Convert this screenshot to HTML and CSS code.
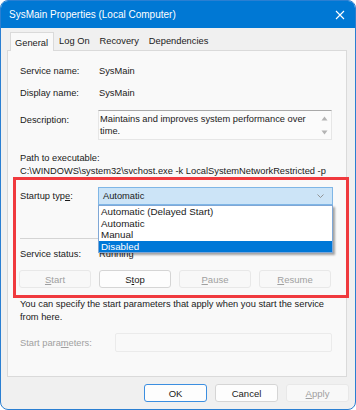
FILE: index.html
```html
<!DOCTYPE html>
<html>
<head>
    <title>SysMain Properties (Local Computer)</title>
    <link rel="stylesheet" href="styles.css">
</head>
<body>
    <div class="window">
        <div class="titlebar">
            <span class="title">SysMain Properties (Local Computer)</span>
            <svg class="close" width="10" height="10" viewBox="0 0 10 10">
                <path d="M1 1L9 9M9 1L1 9" stroke="#fff" stroke-width="1.1" fill="none"/>
            </svg>
        </div>

        <div class="tabs">
            <div class="tab active">General</div>
            <div class="tab">Log On</div>
            <div class="tab">Recovery</div>
            <div class="tab">Dependencies</div>
        </div>

        <div class="panel">
            <div class="row row-name">
                <span class="label">Service name:</span>
                <span class="value">SysMain</span>
            </div>
            <div class="row row-display">
                <span class="label">Display name:</span>
                <span class="value">SysMain</span>
            </div>
            <div class="row row-desc">
                <span class="label">Description:</span>
                <div class="textarea">
                    <div class="textarea-text">Maintains and improves system performance over time.</div>
                    <div class="scrollbar">
                        <svg width="7" height="5" viewBox="0 0 7 5"><path d="M3.5 0.5L6.5 4.5H0.5Z" fill="#b4b4b4"/></svg>
                        <svg width="7" height="5" viewBox="0 0 7 5"><path d="M3.5 4.5L6.5 0.5H0.5Z" fill="#b4b4b4"/></svg>
                    </div>
                </div>
            </div>

            <div class="path-label">Path to executable:</div>
            <div class="path">C:\WINDOWS\system32\svchost.exe -k LocalSystemNetworkRestricted -p</div>

            <div class="highlight">
                <div class="row row-startup">
                    <span class="label">Startup typ<u>e</u>:</span>
                    <div class="select">
                        <span>Automatic</span>
                        <svg class="chevron" width="7" height="4" viewBox="0 0 7 4">
                            <path d="M0.5 0.5L3.5 3.5L6.5 0.5" stroke="#8a8a8a" stroke-width="0.9" fill="none"/>
                        </svg>
                        <div class="dropdown">
                            <div class="option">Automatic (Delayed Start)</div>
                            <div class="option">Automatic</div>
                            <div class="option">Manual</div>
                            <div class="option selected">Disabled</div>
                        </div>
                    </div>
                </div>
                <div class="separator"></div>
                <div class="row row-status">
                    <span class="label">Service status:</span>
                    <span class="value">Running</span>
                </div>
                <div class="service-buttons">
                    <button class="btn" disabled><u>S</u>tart</button>
                    <button class="btn">S<u>t</u>op</button>
                    <button class="btn" disabled><u>P</u>ause</button>
                    <button class="btn" disabled><u>R</u>esume</button>
                </div>
                <div class="red-frame"></div>
            </div>

            <div class="info">You can specify the start parameters that apply when you start the service from here.</div>

            <div class="row row-params">
                <span class="label params-label">Start para<u>m</u>eters:</span>
                <div class="input"></div>
            </div>
        </div>

        <div class="footer">
            <button class="btn default">OK</button>
            <button class="btn">Cancel</button>
            <button class="btn" disabled><u>A</u>pply</button>
        </div>
    </div>
</body>
</html>
```

FILE: styles.css
```css
body {
    margin: 0;
    background: #ffffff;
    font-family: "Liberation Sans", Arial, sans-serif;
    font-size: 9.3px;
    color: #1a1a1a;
}
.window {
    width: 356px;
    height: 410px;
    box-sizing: border-box;
    border: 1px solid #2a7fd2;
    border-radius: 8px;
    background: #f0f0f0;
    overflow: hidden;
}
.titlebar {
    height: 27px;
    background: #0078d4;
    color: #ffffff;
    display: flex;
    align-items: center;
    justify-content: space-between;
    padding: 0 10px 0 8px;
}
.title {
    font-size: 10px;
}
.tabs {
    display: flex;
    margin: 4px 0 0 9px;
    height: 18px;
    position: relative;
    z-index: 1;
}
.tab {
    padding: 0 5px;
    line-height: 18px;
    font-size: 9.3px;
}
.tab.active {
    padding: 0 5px 0 4px;
    height: 19px;
    background: #f9f9f9;
    border: 1px solid #dadada;
    border-bottom: none;
    box-sizing: border-box;
    line-height: 20px;
}
.panel {
    margin-left: 6px;
    width: 340px;
    height: 327px;
    box-sizing: border-box;
    background: #f9f9f9;
    border: 1px solid #dadada;
    padding: 0 12px;
}
.row {
    display: flex;
    align-items: center;
    height: 18px;
}
.label {
    width: 78px;
    flex-shrink: 0;
}
.value {
    padding-left: 1px;
}
.row-name {
    margin-top: 11px;
}
.row-display {
    margin-top: 4px;
}
.row-desc {
    margin-top: 8px;
    height: 30px;
    align-items: flex-start;
}
.row-desc .label {
    line-height: 20px;
}
.textarea {
    width: 234px;
    height: 30px;
    box-sizing: border-box;
    background: #fbfbfb;
    border: 1px solid #e6e6e6;
    border-top-color: #a9a9a9;
    display: flex;
}
.textarea-text {
    flex: 1;
    padding: 2px 1px;
    line-height: 12px;
}
.scrollbar {
    width: 13px;
    display: flex;
    flex-direction: column;
    align-items: center;
    justify-content: space-between;
    padding: 5px 0 4px;
    box-sizing: border-box;
}
.path-label {
    margin-top: 11px;
    line-height: 14px;
}
.path {
    line-height: 13px;
}
.highlight {
    position: relative;
    padding-top: 9px;
    padding-bottom: 10px;
}
.red-frame {
    position: absolute;
    top: -1px;
    bottom: 0;
    left: -7px;
    width: 336px;
    box-sizing: border-box;
    border: 3px solid #f03a3e;
    pointer-events: none;
}
.select {
    position: relative;
    width: 235px;
    height: 18px;
    box-sizing: border-box;
    background: #cce4f7;
    border: 1px solid #7fb6e6;
    display: flex;
    align-items: center;
    justify-content: space-between;
    padding: 0 8px 0 4px;
}
.dropdown {
    position: absolute;
    top: 17px;
    left: -1px;
    width: 235px;
    box-sizing: border-box;
    background: #ffffff;
    border: 1px solid #7fa7d6;
    box-shadow: 2px 2px 2px rgba(0, 0, 0, 0.35);
    z-index: 2;
}
.option {
    height: 11.5px;
    line-height: 11.5px;
    padding-left: 2px;
    font-size: 9.8px;
}
.option.selected {
    background: #0078d7;
    color: #ffffff;
}
.separator {
    margin-top: 33px;
    height: 1px;
    width: 313px;
    background: #d4d4d4;
}
.row-status {
    margin-top: 6px;
}
.service-buttons {
    margin-top: 7px;
    display: grid;
    grid-template-columns: repeat(4, 72px);
    column-gap: 8px;
    margin-left: -1px;
}
.btn {
    height: 18px;
    padding: 0;
    font-family: "Liberation Sans", Arial, sans-serif;
    font-size: 9.5px;
    color: #1a1a1a;
    background: #fdfdfd;
    border: 1px solid #d5d5d5;
    border-radius: 3px;
}
.btn:disabled {
    color: #a0a0a0;
    background: #f8f8f8;
    border-color: #e8e8e8;
}
.info {
    line-height: 13px;
    width: 312px;
}
.row-params {
    margin-top: 9px;
    height: 19px;
}
.params-label {
    width: 95px;
    color: #a0a0a0;
}
.input {
    width: 217px;
    height: 19px;
    box-sizing: border-box;
    background: #f9f9f9;
    border: 1px solid #ebebeb;
    border-radius: 2px;
}
.footer {
    display: flex;
    justify-content: flex-end;
    gap: 8px;
    margin-top: 7px;
    padding-right: 6px;
}
.footer .btn {
    width: 63px;
}
.footer .btn.default {
    border: 1px solid #3b8ee0;
}
```
